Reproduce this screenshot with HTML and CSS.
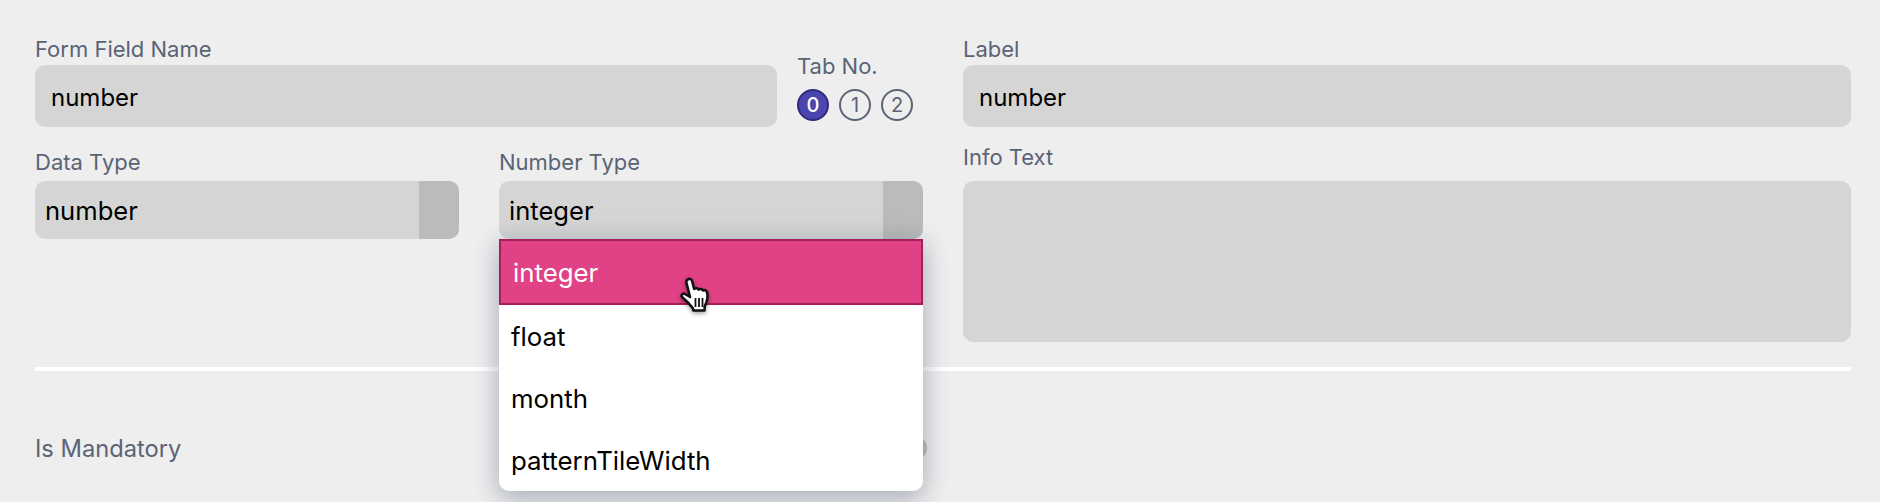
FILE: index.html
```html
<!DOCTYPE html>
<html lang="en">
<head>
<meta charset="utf-8">
<title>Form field</title>
<link rel="stylesheet" href="styles.css">
</head>
<body>
<main class="form">
  <section class="top">
    <div class="left">
      <div class="row-name">
        <div class="field grow">
          <label class="lbl">Form Field Name</label>
          <div class="input"><span>number</span></div>
        </div>
        <div class="tabs">
          <label class="lbl">Tab No.</label>
          <div class="tab-list">
            <span class="tab active">0</span>
            <span class="tab">1</span>
            <span class="tab">2</span>
          </div>
        </div>
      </div>
      <div class="row-types">
        <div class="field">
          <label class="lbl">Data Type</label>
          <div class="select"><span class="val">number</span><span class="arrow"></span></div>
        </div>
        <div class="field dd-host">
          <label class="lbl">Number Type</label>
          <div class="select"><span class="val">integer</span><span class="arrow"></span></div>
          <ul class="menu">
            <li class="opt sel">integer
              <svg class="cursor" viewBox="0 0 32 36" width="32" height="36" aria-hidden="true">
                <path d="M9.500 2c1.800-.6 3.200.5 3.700 2.300l2 7.700c.9-1.100 3.600-1.200 4.500.6.900-1 3.500-.9 4.300.9.900-.7 3.300-.4 4 1.700.9 3 .6 7-.7 10.300l-1.600 4-.2 4H14.500l-.8-2.500C11 27.500 7 23.500 3.300 20.300c-1.800-1.900.3-4.600 2.700-3.300l5 3L7.500 6c-.4-1.800.4-3.400 2-4z" fill="#fff" stroke="#111" stroke-width="2.600" stroke-linejoin="round"/>
                <path d="M16.500 21v9M20 21v9M23.500 21v9" stroke="#111" stroke-width="1.800" fill="none"/>
              </svg>
            </li>
            <li class="opt">float</li>
            <li class="opt">month</li>
            <li class="opt">patternTileWidth</li>
          </ul>
        </div>
      </div>
    </div>
    <div class="right">
      <div class="field">
        <label class="lbl">Label</label>
        <div class="input"><span>number</span></div>
      </div>
      <div class="field info">
        <label class="lbl">Info Text</label>
        <div class="textarea"></div>
      </div>
    </div>
  </section>
  <hr class="rule">
  <section class="mandatory">
    <span class="lbl lbl-large">Is Mandatory</span>
    <span class="toggle"></span>
  </section>
</main>
</body>
</html>
```
FILE: styles.css
```css
* { box-sizing: border-box; }
html, body { margin: 0; height: 502px; overflow: hidden; }
body { background: #eeeeee; font-family: Inter, "Liberation Sans", sans-serif; color: #000; }
.form { padding: 36px 29px 0 35px; }
.top { display: grid; grid-template-columns: 888px 888px; column-gap: 40px; }
.left { width: 888px; }
.lbl { display: block; font-size: 22px; line-height: 26px; color: #5a6475; }
.lbl-large { font-size: 23.7px; padding-top: 1px; }
.row-name { display: flex; gap: 20px; height: 91px; }
.grow { flex: 0 0 742px; }
.input { height: 62px; margin-top: 3px; padding: 2px 0 0 16px; background: #d5d5d5; border-radius: 10px; display: flex; align-items: center; font-size: 24px; }
.tabs { padding-top: 17px; }
.tab-list { display: flex; gap: 10px; margin-top: 10px; }
.tab { width: 32px; height: 32px; border-radius: 50%; border: 2px solid #5a6475; color: #5a6475; display: flex; align-items: center; justify-content: center; font-size: 20px; }
.tab.active { background: #4a46ae; border-color: #2e2a80; color: #fff; font-weight: 500; }
.row-types { display: grid; grid-template-columns: 424px 424px; column-gap: 40px; margin-top: 22px; }
.select { height: 58px; margin-top: 6px; background: #d5d5d5; border-radius: 10px; display: flex; overflow: hidden; font-size: 25.6px; }
.val { flex: 1; padding: 0 0 0 10px; display: flex; align-items: center; }
.arrow { width: 40px; background: #bbbbbb; }
.dd-host { position: relative; }
.menu { position: absolute; left: 0; right: 0; top: 90px; margin: 0; padding: 0; list-style: none; background: #fff; border-radius: 0 0 10px 10px; box-shadow: 0 10px 25px rgba(80, 90, 120, .3), 0 0 25px rgba(80, 90, 120, .2); z-index: 5; font-size: 25.8px; height: 252px; }
.opt { height: 62px; padding-left: 12px; display: flex; align-items: center; position: relative; }
.opt.sel { height: 66px; padding-left: 12px; background: #e04285; color: #fff; border: 2px solid #a5205a; }
.cursor { position: absolute; left: 178px; top: 36px; filter: drop-shadow(0 2px 2px rgba(0,0,0,.35)); }
.right { display: flex; flex-direction: column; }
.info { margin-top: 17px; }
.textarea { height: 161px; margin-top: 11px; background: #d5d5d5; border-radius: 10px; }
.rule { border: 0; height: 4px; background: #fff; margin: 25px 0 0; width: 1816px; }
.mandatory { position: relative; margin-top: 64px; height: 26px; }
.toggle { position: absolute; left: 858px; top: 1px; width: 34px; height: 24px; background: #bdbdbd; border-radius: 12px; }
```
